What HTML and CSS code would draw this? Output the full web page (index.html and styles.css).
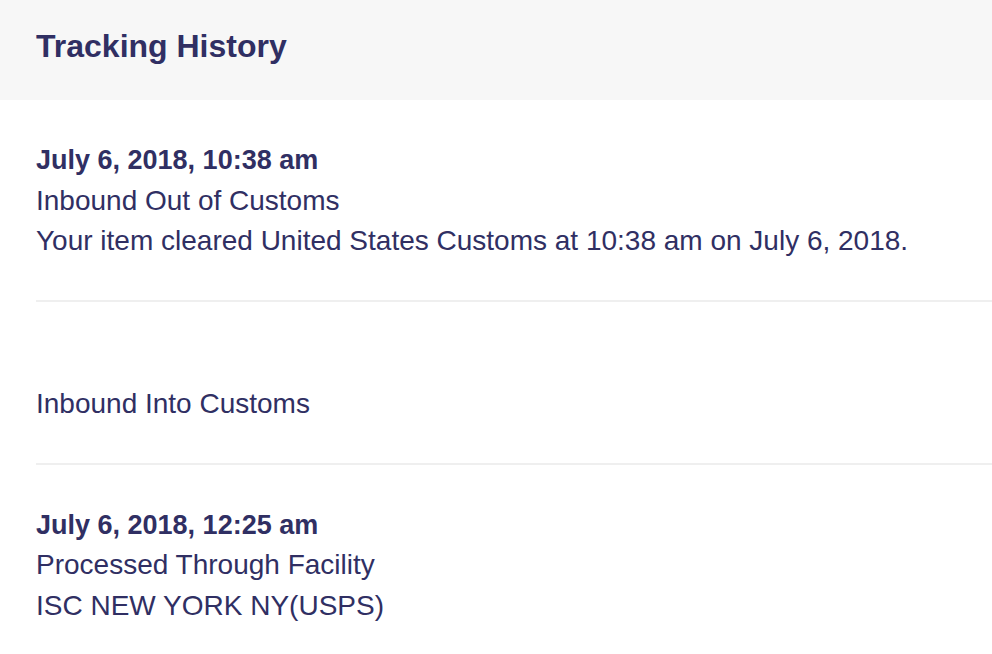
FILE: index.html
```html
<!DOCTYPE html>
<html>
<head>
<meta charset="utf-8">
<link rel="stylesheet" href="styles.css">
</head>
<body>
<div class="page">
  <header class="head"><h1 class="title">Tracking History</h1></header>
  <div class="list">
    <div class="entry">
      <div class="date">July 6, 2018, 10:38 am</div>
      <div class="status">Inbound Out of Customs</div>
      <div class="detail">Your item cleared United States Customs at 10:38 am on July 6, 2018.</div>
    </div>
    <div class="entry">
      <div class="date"></div>
      <div class="status">Inbound Into Customs</div>
    </div>
    <div class="entry">
      <div class="date">July 6, 2018, 12:25 am</div>
      <div class="status">Processed Through Facility</div>
      <div class="detail">ISC NEW YORK NY(USPS)</div>
    </div>
  </div>
  <div class="edge"></div>
</div>
</body>
</html>
```
FILE: styles.css
```css
* { box-sizing: border-box; }
html, body { margin: 0; padding: 0; background: #fff; }
body { font-family: "Liberation Sans", Arial, sans-serif; color: #302f63; }
.page { width: 992px; height: 654px; overflow: hidden; display: flex; flex-direction: column; }
.head { height: 100px; background: #f7f7f7; padding: 0 36px; display: flex; align-items: center; flex-shrink: 0; }
.title { margin: 0; font-size: 32px; font-weight: bold; line-height: 1; padding-bottom: 8px; }
.list { flex: 1; padding-left: 36px; }
.entry { padding: 40px 0 38px; border-bottom: 2px solid #efefef; font-size: 28px; line-height: 40.5px; }
.entry:last-child { border-bottom: none; }
.date { font-weight: bold; font-size: 27px; height: 40.5px; }
.date:empty { height: 42.5px; }
.edge { height: 2px; flex-shrink: 0; background: linear-gradient(90deg, #6a6a6a 0%, #5a5a58 10%, #2a2b25 20%, #3a3b33 40%, #22231e 55%, #4a4b44 70%, #6a6a6a 85%, #707070 100%); }
```
